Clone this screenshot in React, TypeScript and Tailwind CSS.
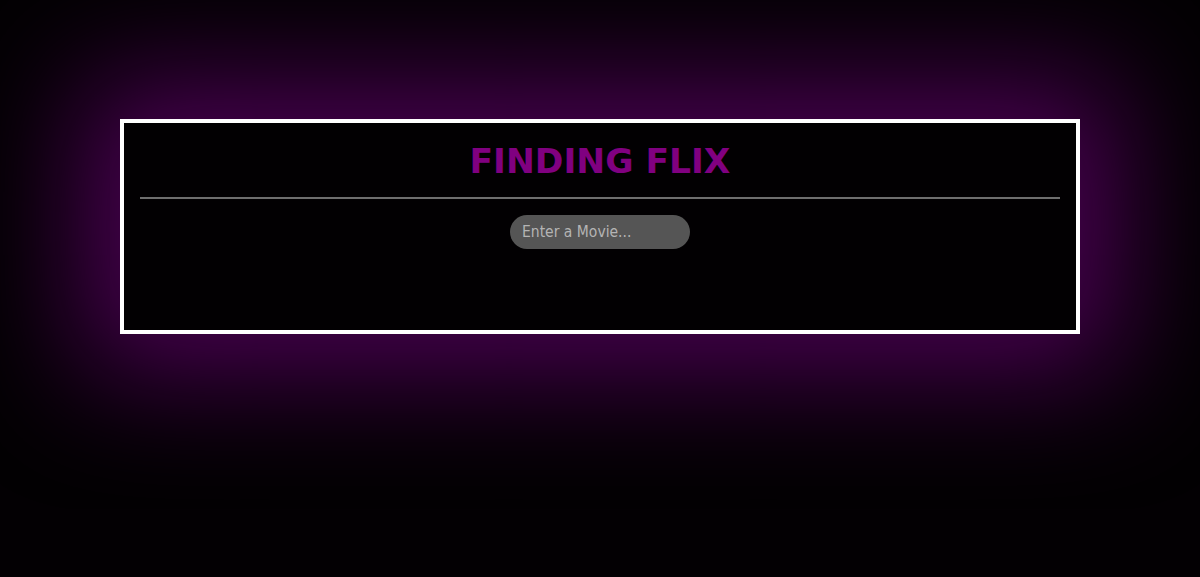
export default function App() {
  return (
    <div className="min-h-[577px] w-full bg-[#030003] pt-[119px]" style={{ fontFamily: '"DejaVu Sans", Verdana, sans-serif' }}>
      <div className="mx-auto h-[215px] w-[960px] border-4 border-white bg-[#020002] px-4 shadow-[0_0_120px_40px_#4a0052]">
        <h1 className="pt-[15px] text-center text-[34.5px] font-bold leading-[46px] text-[#800080]">FINDING FLIX</h1>
        <div className="mt-[13px] h-[2px] bg-[#6e6e6e]" />
        <div className="mt-[16px] flex justify-center">
          <input
            placeholder="Enter a Movie..."
            className="h-[34px] w-[180px] rounded-full bg-[#555555] px-3 text-[15.5px] text-[#bbbbbb] outline-none placeholder:text-[#b4b4b4]"
            style={{ fontFamily: '"DejaVu Sans Condensed", "DejaVu Sans", sans-serif', fontStretch: 'condensed' }}
          />
        </div>
      </div>
    </div>
  );
}
